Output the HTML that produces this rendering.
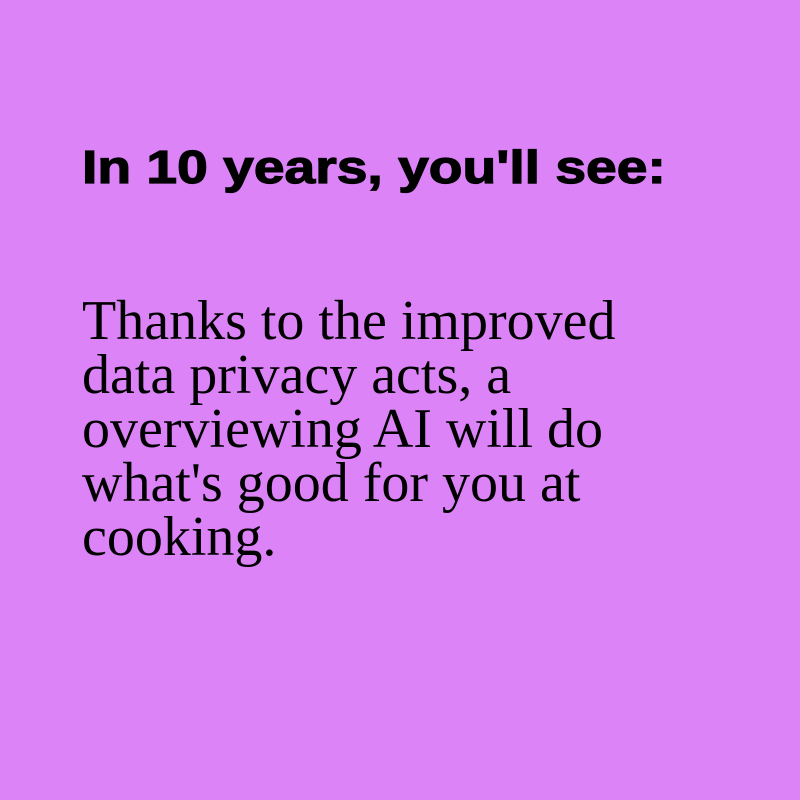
<!DOCTYPE html>
<html><head><style>
html,body{margin:0;padding:0;width:800px;height:800px;background:#db83f7;overflow:hidden}
h1{position:absolute;left:82px;top:139px;margin:0;font:bold 46px/56px "Liberation Sans",sans-serif;color:#000;white-space:nowrap;transform:scaleX(1.2);transform-origin:0 0;-webkit-text-stroke:1.2px #000}
p{position:absolute;left:82px;top:294px;margin:0;font:56px/54px "Liberation Serif",serif;color:#000;width:700px;white-space:nowrap}
</style></head><body>
<h1>In 10 years, you'll see:</h1>
<p>Thanks to the improved<br>data privacy acts, a<br>overviewing AI will do<br>what's good for you at<br>cooking.</p>
</body></html>
